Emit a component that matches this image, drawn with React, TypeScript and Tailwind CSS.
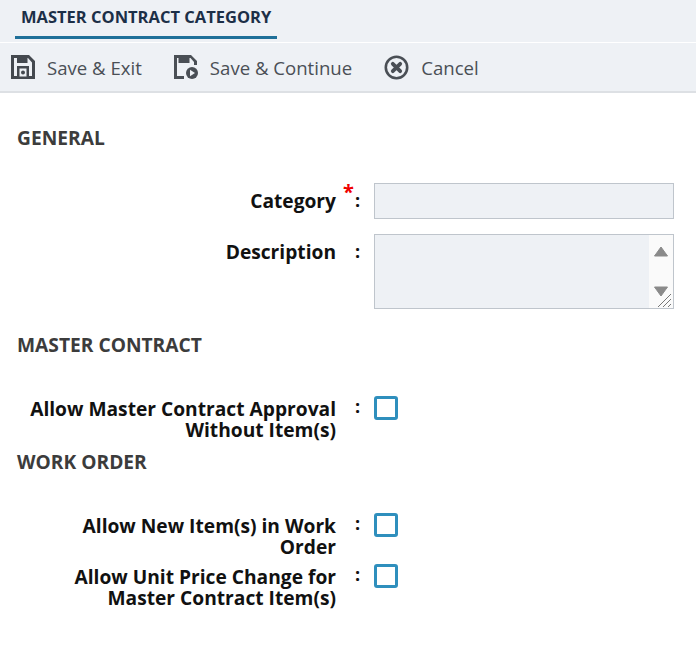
const font = { fontFamily: '"Open Sans", sans-serif' };

function SaveExitIcon() {
  return (
    <svg width="24" height="24" viewBox="0 0 24 24" className="shrink-0">
      <path
        fillRule="evenodd"
        fill="#44494f"
        d="M0 0H18L24 6V24H0ZM3 3V21H6V11H18V21H21V7.5L17 3H16.5V8H6V3ZM9 14V24H15V14Z"
      />
      <rect x="6" y="11" width="12" height="13" fill="#44494f" />
      <rect x="8.5" y="13.5" width="7" height="8" fill="#eef1f5" />
      <circle cx="12" cy="17.5" r="2" fill="#44494f" />
    </svg>
  );
}

function SaveContinueIcon() {
  return (
    <svg width="24" height="24" viewBox="0 0 24 24" className="shrink-0">
      <path
        fill="#4a4f55"
        fillRule="evenodd"
        d="M0 0H17L23 6V10H20V7L16.5 3H15.5V8H4.5V3H3V21H10V24H0Z"
      />
      <circle cx="18" cy="18" r="6" fill="#4a4f55" />
      <path d="M16 14.8L21 18L16 21.2Z" fill="#eef1f5" />
    </svg>
  );
}

function CancelIcon() {
  return (
    <svg width="25" height="25" viewBox="0 0 25 25" className="shrink-0">
      <circle cx="12.5" cy="12.5" r="10.7" fill="none" stroke="#4a4f55" strokeWidth="2.6" />
      <path d="M8.8 8.8L16.2 16.2M16.2 8.8L8.8 16.2" stroke="#4a4f55" strokeWidth="3.8" strokeLinecap="round" />
    </svg>
  );
}

function Heading({ children, className }: { children: React.ReactNode; className: string }) {
  return <h2 className={`pl-[17px] text-[19.2px] leading-[24px] font-bold text-[#3c3c3c] ${className}`}>{children}</h2>;
}

function Row({ label, required, children, className }: { label: React.ReactNode; required?: boolean; children: React.ReactNode; className?: string }) {
  return (
    <div className={`flex items-start ${className ?? ""}`}>
      <label className="w-[336px] shrink-0 pl-[20px] text-right text-[19.2px] leading-[21px] font-bold text-[#111]">{label}</label>
      <span className="relative w-[38px] shrink-0 pl-[19px] text-[18px] leading-[21px] font-bold text-[#111]">
        {required && <span className="absolute top-[-2px] left-[7px] text-[20px] leading-[21px] text-[#f00000]">*</span>}:
      </span>
      {children}
    </div>
  );
}

function Check() {
  return <span className="block h-[24px] w-[24px] rounded-[3px] border-[3px] border-[#2f8fbd] bg-white" />;
}

export default function App() {
  return (
    <div style={font} className="h-[646px] w-[696px] overflow-hidden bg-white">
      <div className="h-[42px] bg-[#eef1f5] pl-[15px]">
        <div className="inline-block h-[39px] border-b-[3px] border-[#1f7099] px-[6px] pt-[5px] text-[16.5px] leading-[24px] font-bold text-[#1c2f47]">
          MASTER CONTRACT CATEGORY
        </div>
      </div>
      <div className="mt-px flex h-[50px] items-center border-b-2 border-[#dde0e4] bg-[#eef1f5] pl-[11px] text-[18.6px] text-[#4a4f55]">
        <SaveExitIcon />
        <span className="mt-[2px] ml-[12px]">Save &amp; Exit</span>
        <span className="ml-[32px]"><SaveContinueIcon /></span>
        <span className="mt-[2px] ml-[12px]">Save &amp; Continue</span>
        <span className="ml-[32px]"><CancelIcon /></span>
        <span className="mt-[2px] ml-[12px]">Cancel</span>
      </div>

      <Heading className="mt-[33px]">GENERAL</Heading>
      <Row label="Category" required className="mt-[33px] [&>label]:pt-[7px] [&>span]:pt-[7px]">
        <input className="h-[36px] w-[300px] border border-[#bfc5cc] bg-[#eef1f5]" />
      </Row>
      <Row label="Description" className="mt-[15px] [&>label]:pt-[7px] [&>span]:pt-[7px]">
        <div className="relative flex h-[75px] w-[300px] border border-[#bfc5cc]">
          <div className="flex-1 bg-[#eef1f5]" />
          <div className="relative w-[24px] bg-[#fafafa]">
            <svg width="24" height="73" viewBox="0 0 24 73">
              <path d="M5.5 21L12 12L18.5 21Z" fill="#8a8a8a" stroke="#8a8a8a" strokeLinejoin="round" />
              <path d="M5.5 52L12 61L18.5 52Z" fill="#8a8a8a" stroke="#8a8a8a" strokeLinejoin="round" />
              <path d="M9 72L22 59M14 72L22 64M19 72L22 69" stroke="#777" strokeWidth="1" />
            </svg>
          </div>
        </div>
      </Row>

      <Heading className="mt-[24px]">MASTER CONTRACT</Heading>
      <Row label={<>Allow Master Contract Approval<br />Without Item(s)</>} className="mt-[39px] [&>label]:pt-[2px]">
        <Check />
      </Row>
      <Heading className="mt-[10px]">WORK ORDER</Heading>
      <Row label={<>Allow New Item(s) in Work<br />Order</>} className="mt-[39px] [&>label]:pt-[2px]">
        <Check />
      </Row>
      <Row label={<>Allow Unit Price Change for<br />Master Contract Item(s)</>} className="mt-[7px] [&>label]:pt-[2px]">
        <Check />
      </Row>
    </div>
  );
}
